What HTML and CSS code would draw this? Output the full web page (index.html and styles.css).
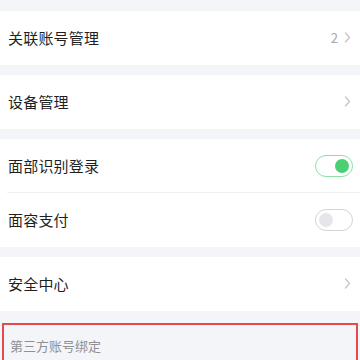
FILE: index.html
```html
<!DOCTYPE html>
<html lang="zh-CN">
  <head>
    <meta charset="UTF-8" />
    <meta name="viewport" content="width=device-width, initial-scale=1.0" />
    <title>账号与安全</title>
    <link rel="stylesheet" href="styles.css">
  </head>
  <body>
    <div class="settings">
      <div class="group">
        <div class="row">
          <span class="label">关联账号管理</span>
          <span class="extra">
            <span class="count">2</span>
            <svg class="chevron" width="7" height="11" viewBox="0 0 7 11"><polyline points="1.5,1 5.5,5.5 1.5,10" /></svg>
          </span>
        </div>
      </div>

      <div class="group">
        <div class="row">
          <span class="label">设备管理</span>
          <span class="extra">
            <svg class="chevron" width="7" height="11" viewBox="0 0 7 11"><polyline points="1.5,1 5.5,5.5 1.5,10" /></svg>
          </span>
        </div>
      </div>

      <div class="group">
        <div class="row divided">
          <span class="label">面部识别登录</span>
          <span class="switch on"><span class="knob"></span></span>
        </div>
        <div class="row">
          <span class="label">面容支付</span>
          <span class="switch"><span class="knob"></span></span>
        </div>
      </div>

      <div class="group">
        <div class="row">
          <span class="label">安全中心</span>
          <span class="extra">
            <svg class="chevron" width="7" height="11" viewBox="0 0 7 11"><polyline points="1.5,1 5.5,5.5 1.5,10" /></svg>
          </span>
        </div>
      </div>

      <div class="section-title highlighted">第三方账号绑定</div>
    </div>
  </body>
</html>
```

FILE: styles.css
```css
/* Basic reset */
* {
  margin: 0;
  padding: 0;
  box-sizing: border-box;
}

body {
  font-family: "Noto Sans CJK SC", "Noto Sans", sans-serif;
  background-color: #f4f5f9;
  color: #1f1f1f;
  overflow: hidden;
}

.settings {
  padding-top: 11px;
}

/* White card groups */
.group {
  background-color: #fff;
  margin-bottom: 10px;
}

.row {
  display: flex;
  justify-content: space-between;
  align-items: center;
  height: 54px;
  padding: 0 7px 1px 8px;
  position: relative;
}

.row.divided::after {
  content: "";
  position: absolute;
  left: 7px;
  right: 0;
  bottom: 0;
  height: 1px;
  background-color: #f0f0f3;
}

.label {
  font-size: 15px;
  letter-spacing: 0.2px;
}

.extra {
  display: flex;
  align-items: center;
  gap: 6px;
  padding-right: 2px;
}

.count {
  font-size: 13px;
  color: #a8a8a8;
}

.chevron polyline {
  fill: none;
  stroke: #c6c6c8;
  stroke-width: 1.3;
  stroke-linecap: round;
  stroke-linejoin: round;
}

/* Toggle switches */
.switch {
  width: 38px;
  height: 22px;
  border-radius: 11px;
  border: 1.5px solid #d4d4d8;
  background-color: #fff;
  display: flex;
  align-items: center;
  padding: 0 3px;
}

.switch .knob {
  width: 14px;
  height: 14px;
  border-radius: 50%;
  background-color: #e6e6ea;
}

.switch.on {
  border-color: #8ee0a8;
  justify-content: flex-end;
}

.switch.on .knob {
  background-color: #4ccf72;
}

/* Section header */
.section-title {
  margin-top: 12px;
  font-size: 13px;
  color: #8f8f94;
  padding: 11px 6px 12px;
}

.highlighted {
  margin-left: 2px;
  margin-right: 2px;
  border: 2px solid #e5484d;
  border-bottom: none;
}
```
